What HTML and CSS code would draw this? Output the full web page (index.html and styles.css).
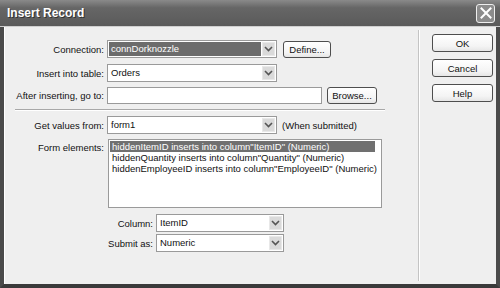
FILE: index.html
```html
<!DOCTYPE html>
<html lang="en">
<head>
  <meta charset="UTF-8">
  <title>Insert Record</title>
  <link rel="stylesheet" href="styles.css">
</head>
<body>
<div class="window">
  <div class="titlebar">
    <span class="title">Insert Record</span>
    <span class="close">
      <svg width="12" height="12" viewBox="0 0 12 12"><path d="M1.5 1.5 L10.5 10.5 M10.5 1.5 L1.5 10.5" stroke="#fff" stroke-width="2" stroke-linecap="square"/></svg>
    </span>
  </div>

  <div class="body">
    <div class="main">
      <div class="row">
        <span class="label">Connection:</span>
        <div class="select w170 active"><span class="value">connDorknozzle</span><span class="arrow"><svg width="9" height="6" viewBox="0 0 9 6"><path d="M1 1 L4.5 4.5 L8 1" fill="none" stroke="#555" stroke-width="1.6"/></svg></span></div>
        <button class="btn define">Define...</button>
      </div>

      <div class="row gap6">
        <span class="label">Insert into table:</span>
        <div class="select w170"><span class="value">Orders</span><span class="arrow"><svg width="9" height="6" viewBox="0 0 9 6"><path d="M1 1 L4.5 4.5 L8 1" fill="none" stroke="#555" stroke-width="1.6"/></svg></span></div>
      </div>

      <div class="row gap4">
        <span class="label">After inserting, go to:</span>
        <div class="input"></div>
        <button class="btn browse">Browse...</button>
      </div>

      <div class="sep"></div>

      <div class="row gap5">
        <span class="label">Get values from:</span>
        <div class="select w170"><span class="value">form1</span><span class="arrow"><svg width="9" height="6" viewBox="0 0 9 6"><path d="M1 1 L4.5 4.5 L8 1" fill="none" stroke="#555" stroke-width="1.6"/></svg></span></div>
        <span class="note">(When submitted)</span>
      </div>

      <div class="row gap5 top">
        <span class="label">Form elements:</span>
        <ul class="list">
          <li class="sel">hiddenItemID inserts into column"ItemID" (Numeric)</li>
          <li>hiddenQuantity inserts into column"Quantity" (Numeric)</li>
          <li>hiddenEmployeeID inserts into column"EmployeeID" (Numeric)</li>
        </ul>
      </div>

      <div class="sub">
        <div class="row">
          <span class="label short">Column:</span>
          <div class="select w128"><span class="value">ItemID</span><span class="arrow"><svg width="9" height="6" viewBox="0 0 9 6"><path d="M1 1 L4.5 4.5 L8 1" fill="none" stroke="#555" stroke-width="1.6"/></svg></span></div>
        </div>
        <div class="row gap2">
          <span class="label short">Submit as:</span>
          <div class="select w128"><span class="value">Numeric</span><span class="arrow"><svg width="9" height="6" viewBox="0 0 9 6"><path d="M1 1 L4.5 4.5 L8 1" fill="none" stroke="#555" stroke-width="1.6"/></svg></span></div>
        </div>
      </div>
    </div>

    <div class="divider"></div>

    <div class="side">
      <button class="btn side-btn">OK</button>
      <button class="btn side-btn">Cancel</button>
      <button class="btn side-btn">Help</button>
    </div>
  </div>
</div>
</body>
</html>
```

FILE: styles.css
```css
body {
  margin: 0;
  font-family: 'Liberation Sans', Arial, sans-serif;
  font-size: 9.5px;
  color: #111;
}
.window {
  width: 500px;
  height: 288px;
  box-sizing: border-box;
  background: #efefef;
  border-left: 4px solid #4a4a4a;
  border-right: 4px solid #4a4a4a;
  border-bottom: 4px solid #3a3a3a;
  display: flex;
  flex-direction: column;
  white-space: nowrap;
}
.titlebar {
  height: 27px;
  margin: 0 -4px;
  padding: 0 5px 0 7px;
  background: linear-gradient(#8a8a8a, #666 30%, #5a5a5a);
  border-bottom: 1px solid #cfcfcf;
  display: flex;
  align-items: center;
  justify-content: space-between;
  box-sizing: border-box;
}
.title {
  color: #fff;
  font-weight: bold;
  font-size: 12px;
  text-shadow: 1px 1px 0 #333;
}
.close {
  width: 17px;
  height: 17px;
  border: 1px solid #eee;
  border-radius: 3px;
  background: #8c8c8c;
  display: flex;
  align-items: center;
  justify-content: center;
}
.body {
  flex: 1;
  display: flex;
  border-left: 1px solid #fff;
}
.main {
  padding: 13px 0 0 7px;
  width: 396px;
}
.row {
  display: flex;
  align-items: center;
  height: 18px;
}
.row.top {
  align-items: flex-start;
  height: auto;
}
.gap2 { margin-top: 2px; }
.gap4 { margin-top: 4px; }
.gap5 { margin-top: 5px; }
.gap6 { margin-top: 6px; }
.label {
  width: 92px;
  text-align: right;
  margin-right: 3px;
  flex: none;
}
.row.top .label {
  margin-top: 3px;
}
.label.short {
  width: 141px;
}
.select {
  height: 18px;
  box-sizing: border-box;
  border: 1px solid #9a9a9a;
  background: #fff;
  display: flex;
  align-items: stretch;
  padding: 1px;
}
.w170 { width: 170px; }
.w128 { width: 128px; }
.select .value {
  flex: 1;
  padding-left: 2px;
  line-height: 14px;
}
.select.active .value {
  background: #6c6c6c;
  color: #fff;
}
.arrow {
  width: 13px;
  margin-left: 1px;
  background: #dadada;
  border: 1px solid #e8e8e8;
  box-sizing: border-box;
  display: flex;
  align-items: center;
  justify-content: center;
}
.input {
  width: 215px;
  height: 17px;
  box-sizing: border-box;
  border: 1px solid #9a9a9a;
  background: #fff;
}
.btn {
  font-family: inherit;
  font-size: 9.5px;
  color: #111;
  background: linear-gradient(#fff, #f4f4f4 70%, #e6e6e6);
  border: 1px solid #4e4e4e;
  border-radius: 3px;
  padding: 0;
  box-sizing: border-box;
}
.define {
  margin-left: 6px;
  width: 48px;
  height: 17px;
}
.browse {
  margin-left: 5px;
  width: 50px;
  height: 17px;
}
.note {
  margin-left: 5px;
}
.sep {
  margin: 5px 0 0 3px;
  width: 370px;
  border-top: 1px solid #a8a8a8;
  border-bottom: 1px solid #fff;
}
.list {
  list-style: none;
  margin: 0 0 0 1px;
  padding: 1px;
  width: 274px;
  height: 69px;
  box-sizing: border-box;
  border: 1px solid #9a9a9a;
  background: #fff;
}
.list li {
  line-height: 11px;
  padding-left: 2px;
}
.list li.sel {
  background: #707070;
  color: #fff;
  margin-right: 5px;
}
.sub {
  margin-top: 6px;
}
.divider {
  margin: 3px 0 3px 10px;
  border-left: 1px solid #c4c4c4;
  border-right: 1px solid #fff;
}
.side {
  display: flex;
  flex-direction: column;
  gap: 7px;
  padding: 7px 0 0 12px;
}
.side-btn {
  width: 61px;
  height: 18px;
}
```
